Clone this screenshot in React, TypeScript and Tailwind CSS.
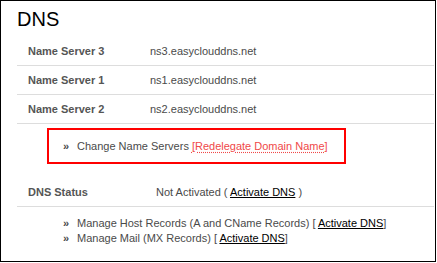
import React from "react";

const rows = [
  ["Name Server 3", "ns3.easyclouddns.net"],
  ["Name Server 1", "ns1.easyclouddns.net"],
  ["Name Server 2", "ns2.easyclouddns.net"],
];

export default function App() {
  return (
    <div className="w-[436px] h-[262px] border border-black bg-white text-[11px] text-[#4a4a4a] font-['Liberation_Sans',Arial,sans-serif]">
      <h1 className="pl-[16px] pt-[8px] text-[20px] leading-[20px] text-black">DNS</h1>
      <div className="ml-[16px] w-[417px] mt-[8px]">
        {rows.map(([l, v]) => (
          <div key={l} className="h-[29px] flex items-center border-b border-[#dddddd]">
            <div className="pl-[11px] w-[133px] font-bold text-[#555555]">{l}</div>
            <div>{v}</div>
          </div>
        ))}
        <div className="ml-[30px] mt-[4px] w-[299px] h-[36px] border-2 border-[#ff0000] flex items-center pl-[14px]">
          <span className="inline-block w-[14px] font-bold">»</span>
          <span>Change Name Servers </span>
          <span className="ml-[3px] text-[#f04848] underline decoration-dotted decoration-[#f04848] underline-offset-[2px]">[Redelegate Domain Name]</span>
        </div>
        <div className="mt-[14px] h-[29px] flex items-center border-b border-[#dddddd]">
          <div className="pl-[11px] w-[139px] font-bold text-[#555555]">DNS Status</div>
          <div>
            Not Activated ( <span className="underline text-black">Activate DNS</span> )
          </div>
        </div>
        <div className="pt-[9px] pl-[46px] leading-[15px]">
          <div className="flex">
            <span className="inline-block w-[14px] font-bold">»</span>
            <span>
              Manage Host Records (A and CName Records) [ <span className="underline text-black">Activate DNS</span>]
            </span>
          </div>
          <div className="flex">
            <span className="inline-block w-[14px] font-bold">»</span>
            <span>
              Manage Mail (MX Records) [ <span className="underline text-black">Activate DNS</span>]
            </span>
          </div>
        </div>
      </div>
    </div>
  );
}
